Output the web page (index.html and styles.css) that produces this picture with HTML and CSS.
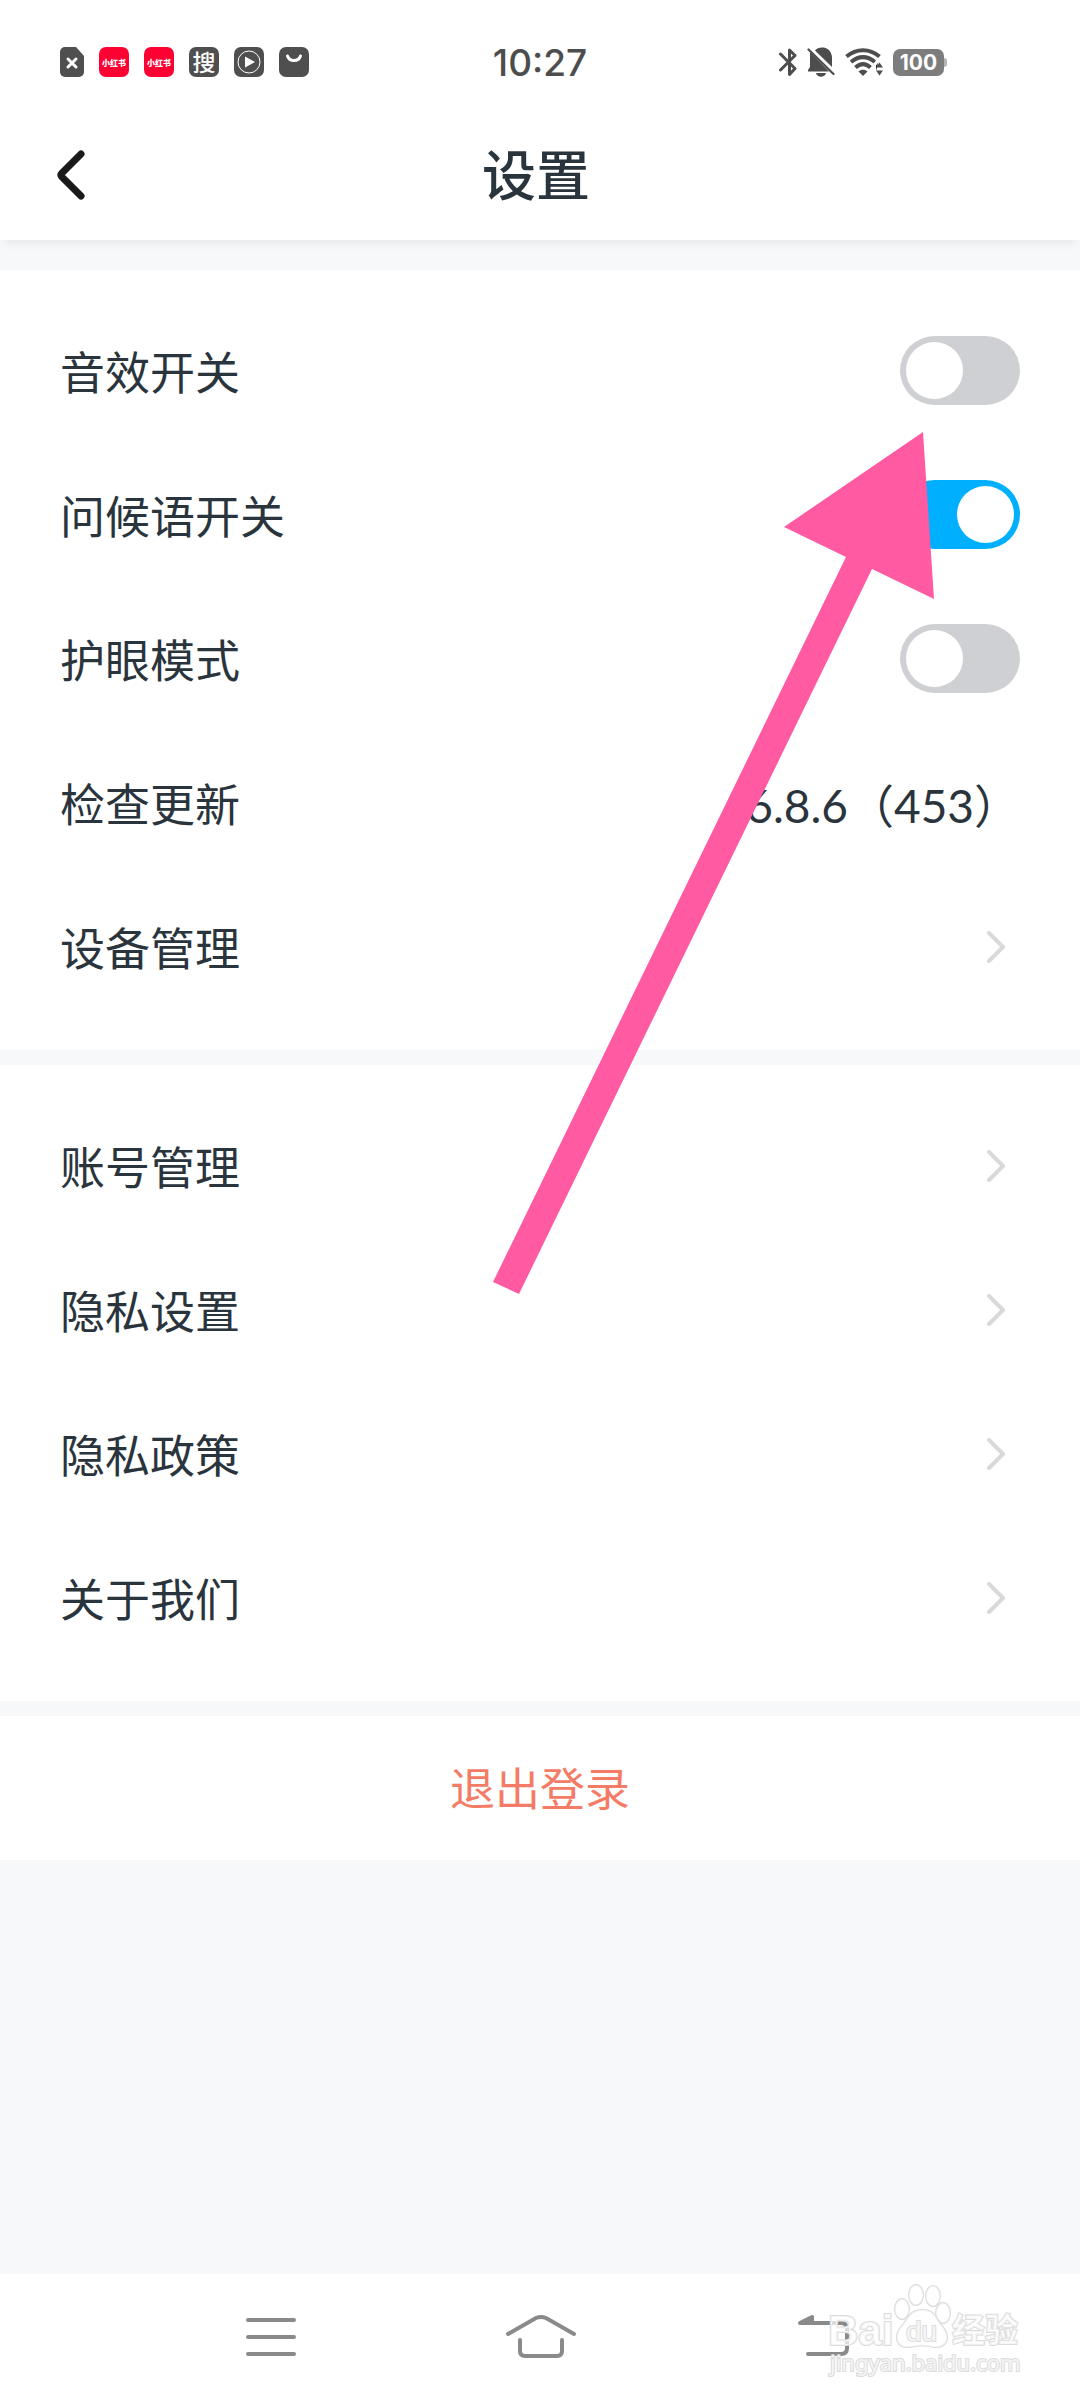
FILE: index.html
```html
<!DOCTYPE html>
<html lang="zh-CN">
<head>
	<meta charset="utf-8">
	<meta name="viewport" content="width=device-width, initial-scale=1">
	<title>设置</title>
	<link rel="stylesheet" href="styles.css">
</head>

<body>
	<div class="status-bar">
		<div class="status-left">
			<svg class="status-file" viewBox="0 0 24 30">
				<path fill="#4f4f4f" d="M5 0H16L24 9V25a5 5 0 0 1-5 5H5a5 5 0 0 1-5-5V5a5 5 0 0 1 5-5z"/>
				<path stroke="#fff" stroke-width="3" stroke-linecap="round" d="M8 12l8 8M16 12l-8 8"/>
			</svg>
			<span class="app-icon app-red">小红书</span>
			<span class="app-icon app-red">小红书</span>
			<span class="app-icon app-search">搜</span>
			<span class="app-icon">
				<svg viewBox="0 0 30 30">
					<circle cx="15" cy="15" r="11" fill="none" stroke="#fff" stroke-width="1"/>
					<path fill="#fff" d="M11 9.500l10 5.500-10 5.500z"/>
				</svg>
			</span>
			<span class="app-icon">
				<svg viewBox="0 0 30 30">
					<path fill="none" stroke="#fff" stroke-width="3" stroke-linecap="round" d="M8.500 9c2 6 11 6 13 0"/>
				</svg>
			</span>
		</div>
		<time class="clock">10:27</time>
		<div class="status-right">
			<svg class="bluetooth" viewBox="0 0 18 30">
				<path fill="none" stroke="#4d4d4d" stroke-width="3" stroke-linecap="round" stroke-linejoin="round" d="M1.500 7L16 21.500l-5.500 6V3l5.500 5.500L1.500 23"/>
			</svg>
			<svg class="bell" viewBox="0 0 28 30">
				<path fill="#4d4d4d" d="M3 5L22 24.500H1V23l2-3zM8 3.500C11-1 24-2 25 10v10zM9 26h10c-1 5-9 5-10 0z"/>
				<path stroke="#4d4d4d" stroke-width="2.200" stroke-linecap="round" d="M1.500 2.500L26.500 27"/>
			</svg>
			<svg class="wifi" viewBox="0 0 38 30">
				<g fill="none" stroke="#4d4d4d" stroke-width="4">
					<path d="M1.500 9.500c10-8.500 23-8.500 33 0"/>
					<path d="M6 15c8-6.500 16-6.500 24 0"/>
					<path d="M10.500 20.500c5-4.500 10-4.500 15 0"/>
				</g>
				<path fill="#4d4d4d" d="M13.500 24.500c2.500-2.500 6.500-2.500 9 0L18 29z"/>
				<path stroke="#fff" stroke-width="3" d="M29.500 30V18L34 12"/>
				<path fill="#4d4d4d" d="M31 20.500l3.500-5 3.500 5zM31 23.500l3.500 5 3.500-5z"/>
			</svg>
			<span class="battery">100</span>
		</div>
	</div>

	<header class="title-bar">
		<button class="back" type="button" aria-label="返回">
			<svg viewBox="0 0 30 52">
				<path fill="none" stroke="#1a1a1a" stroke-width="7" stroke-linecap="round" stroke-linejoin="round" d="M25 4L6 23q-2 2 0 4L25 46"/>
			</svg>
		</button>
		<h1>设置</h1>
	</header>

	<main>
		<section class="group">
			<div class="row">
				<label for="sound">音效开关</label>
				<input class="switch" id="sound" type="checkbox">
			</div>
			<div class="row">
				<label for="greeting">问候语开关</label>
				<input class="switch" id="greeting" type="checkbox" checked>
			</div>
			<div class="row">
				<label for="eye">护眼模式</label>
				<input class="switch" id="eye" type="checkbox">
			</div>
			<a class="row" href="#update">检查更新<span class="version">6.8.6（453）</span></a>
			<a class="row" href="#device">设备管理<svg class="chevron" viewBox="0 0 18 32"><path d="M2 2l14 14L2 30"/></svg></a>
		</section>

		<section class="group">
			<a class="row" href="#account">账号管理<svg class="chevron" viewBox="0 0 18 32"><path d="M2 2l14 14L2 30"/></svg></a>
			<a class="row" href="#privacy">隐私设置<svg class="chevron" viewBox="0 0 18 32"><path d="M2 2l14 14L2 30"/></svg></a>
			<a class="row" href="#policy">隐私政策<svg class="chevron" viewBox="0 0 18 32"><path d="M2 2l14 14L2 30"/></svg></a>
			<a class="row" href="#about">关于我们<svg class="chevron" viewBox="0 0 18 32"><path d="M2 2l14 14L2 30"/></svg></a>
		</section>

		<button class="logout" type="button">退出登录</button>
	</main>

	<nav class="nav-bar">
		<button type="button" aria-label="菜单">
			<svg viewBox="0 0 90 50"><path d="M23 8h46M23 25h46M23 42h46"/></svg>
		</button>
		<button type="button" aria-label="主页">
			<svg viewBox="0 0 90 50"><path d="M13 22L41 6q5-2 10 0l28 16M25 28v11q0 5 5 5h32q5 0 5-5V28"/></svg>
		</button>
		<button type="button" aria-label="返回上一级">
			<svg viewBox="0 0 90 50">
				<path d="M36 11h40q6 0 6 6v19q0 6-6 6H43"/>
				<path class="solid" d="M35 11l12-6v6z"/>
			</svg>
		</button>
	</nav>

	<!-- pointer to the sound switch -->
	<svg class="arrow" viewBox="0 0 442 863">
		<path fill="#ff5aa2" d="M430 0l11 167-62-30L26 862 0 850l353-725-62-30z"/>
	</svg>

	<svg class="watermark" viewBox="0 0 210 104">
		<g class="mark">
			<text class="mark-bai" x="4" y="65">Bai</text>
			<ellipse cx="78" cy="29" rx="7" ry="10"/>
			<ellipse cx="92" cy="15" rx="7" ry="10"/>
			<ellipse cx="109" cy="16" rx="7" ry="10"/>
			<ellipse cx="119" cy="33" rx="7" ry="10"/>
			<path d="M98 30c14 0 14 10 20 16 10 12 4 22-8 21-8-2-16-2-24 0-13 1-17-9-9-20 7-7 8-17 21-17z"/>
			<text class="mark-du" x="82" y="61">du</text>
			<text class="mark-cn" x="128" y="62">经验</text>
			<text class="mark-url" x="6" y="91">jingyan.baidu.com</text>
		</g>
	</svg>
</body>
</html>
```

FILE: styles.css
```css
*{
	box-sizing: border-box;
}
body{
	position: relative;
	display: flex;
	flex-direction: column;
	min-height: 100vh;
	margin: 0;
	background-color: #f7f8fa;
	color: #2a343c;
	font-family: Lato, "Noto Sans CJK SC", sans-serif;
	font-size: 45px;
}
button{
	padding: 0;
	border: none;
	background: none;
	font: inherit;
	cursor: pointer;
}
svg{
	display: block;
}

/* status bar */
.status-bar{
	display: grid;
	grid-template-columns: 1fr auto 1fr;
	align-items: center;
	height: 112px;
	padding: 12px 136px 0 60px;
	background-color: #fff;
	color: #4d4d4d;
}
.status-left, .status-right{
	display: flex;
	align-items: center;
	gap: 15px;
}
.status-file{
	width: 24px;
	height: 30px;
}
.app-icon{
	display: flex;
	align-items: center;
	justify-content: center;
	width: 30px;
	height: 30px;
	border-radius: 7px;
	background-color: #4f4f4f;
	color: #fff;
	white-space: nowrap;
}
.app-red{
	background-color: #ff0033;
	font-size: 8px;
	font-weight: 900;
}
.app-search{
	font-size: 23px;
	font-weight: 500;
	line-height: 30px;
}
.clock{
	margin-left: 76px;
	font-family: Inter, sans-serif;
	font-size: 37px;
	font-weight: 500;
}
.status-right{
	justify-content: flex-end;
	gap: 10px;
}
.bluetooth{
	width: 18px;
	height: 30px;
}
.bell{
	width: 28px;
	height: 30px;
}
.wifi{
	width: 38px;
	height: 30px;
}
.battery{
	position: relative;
	width: 51px;
	height: 27px;
	border-radius: 7px;
	background-color: #7d7d7d;
	color: #fff;
	font-family: Inter, sans-serif;
	font-size: 21px;
	font-weight: 700;
	line-height: 28px;
	text-align: center;
}
.battery::after{
	content: "";
	position: absolute;
	top: 9px;
	left: 51px;
	width: 3px;
	height: 9px;
	border-radius: 0 3px 3px 0;
	background-color: #b4b4b4;
}

/* title */
.title-bar{
	display: grid;
	grid-template-columns: 1fr auto 1fr;
	align-items: center;
	height: 128px;
	padding: 0 64px 0 56px;
	background-color: #fff;
	box-shadow: 0 8px 8px -4px rgba(0, 0, 0, 0.06);
}
.back{
	justify-self: start;
}
.back svg{
	width: 30px;
	height: 52px;
}
h1{
	margin: 0;
	font-size: 54px;
	font-weight: 500;
	line-height: 78px;
}

/* settings */
main{
	display: flex;
	flex-direction: column;
	gap: 15px;
	margin-top: 30px;
}
.group{
	padding: 30px 60px;
	background-color: #fff;
}
.row{
	display: flex;
	align-items: center;
	justify-content: space-between;
	height: 144px;
	padding-bottom: 3px;
	color: inherit;
	text-decoration: none;
}
.version{
	font-size: 46px;
}
.switch{
	appearance: none;
	width: 120px;
	height: 69px;
	margin: 0;
	padding: 6px;
	border-radius: 35px;
	background-color: #cfd0d3;
	cursor: pointer;
}
.switch::before{
	content: "";
	display: block;
	width: 57px;
	height: 57px;
	border-radius: 50%;
	background-color: #fff;
}
.switch:checked{
	background-color: #00b0ff;
}
.switch:checked::before{
	margin-left: auto;
}
.chevron{
	width: 18px;
	height: 32px;
	margin-right: 15px;
	fill: none;
	stroke: #d8d9db;
	stroke-width: 4;
	stroke-linecap: round;
	stroke-linejoin: round;
}
.logout{
	height: 144px;
	padding-bottom: 3px;
	background-color: #fff;
	color: #f47c66;
}

/* system navigation */
.nav-bar{
	display: grid;
	grid-template-columns: repeat(3, 1fr);
	align-items: center;
	height: 126px;
	margin-top: auto;
	padding: 0 12.5%;
	background-color: #fff;
}
.nav-bar button{
	display: flex;
	justify-content: center;
}
.nav-bar svg{
	width: 90px;
	height: 50px;
	fill: none;
	stroke: #8a8a8a;
	stroke-width: 4;
	stroke-linecap: round;
	stroke-linejoin: round;
}
.nav-bar .solid{
	fill: #8a8a8a;
}

/* overlays */
.arrow{
	position: absolute;
	top: 432px;
	right: 145px;
	width: 442px;
	height: 863px;
	pointer-events: none;
}
.watermark{
	position: absolute;
	right: 46px;
	bottom: 16px;
	width: 210px;
	height: 104px;
	pointer-events: none;
}
.mark{
	fill: rgba(255, 255, 255, 0.7);
	stroke: #dcdcdc;
	stroke-width: 2;
	paint-order: stroke;
	font-family: "Liberation Sans", "Noto Sans CJK SC", sans-serif;
}
.mark-bai{
	font-size: 42px;
	font-weight: 700;
}
.mark-du{
	font-size: 28px;
}
.mark-cn{
	font-size: 33px;
	font-weight: 700;
}
.mark-url{
	font-family: "Noto Sans", sans-serif;
	font-size: 22px;
}
```
